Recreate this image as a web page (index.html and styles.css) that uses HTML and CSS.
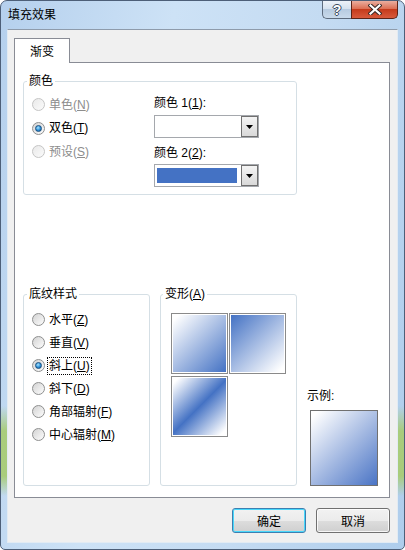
FILE: index.html
```html
<!DOCTYPE html>
<html lang="zh-CN">
<head>
    <meta charset="UTF-8">
    <title>填充效果</title>
    <link rel="stylesheet" href="styles.css">
</head>
<body>

    <div class="window">
        <div class="titlebar">
            <span class="title">填充效果</span>
            <div class="caption-btns">
                <span class="cap help">?</span>
                <span class="cap close">
                    <svg width="14" height="11" viewBox="0 0 14 11">
                        <path d="M2.5 1.5 L11.5 9.5 M11.5 1.5 L2.5 9.5" stroke="#3a2a28" stroke-width="4.2" stroke-linecap="square"/>
                        <path d="M2.5 1.5 L11.5 9.5 M11.5 1.5 L2.5 9.5" stroke="#ffffff" stroke-width="2.2" stroke-linecap="square"/>
                    </svg>
                </span>
            </div>
        </div>

        <div class="client">
            <div class="tabs">
                <div class="tab">渐变</div>
            </div>

            <div class="panel">
                <!-- 颜色 -->
                <fieldset class="group group-color">
                    <legend>颜色</legend>
                    <div class="color-body">
                        <div class="radios">
                            <div class="radio-row disabled"><span class="radio"></span><span class="rlabel">单色(<u>N</u>)</span></div>
                            <div class="radio-row"><span class="radio checked"></span><span class="rlabel">双色(<u>T</u>)</span></div>
                            <div class="radio-row disabled"><span class="radio"></span><span class="rlabel">预设(<u>S</u>)</span></div>
                        </div>
                        <div class="pickers">
                            <div class="picker-label">颜色 1(<u>1</u>):</div>
                            <div class="dropdown">
                                <span class="drop-btn"><svg width="7" height="4" viewBox="0 0 7 4"><path d="M0 0H7L3.5 4Z" fill="#000"/></svg></span>
                            </div>
                            <div class="picker-label second">颜色 2(<u>2</u>):</div>
                            <div class="dropdown">
                                <span class="swatch"></span>
                                <span class="drop-btn"><svg width="7" height="4" viewBox="0 0 7 4"><path d="M0 0H7L3.5 4Z" fill="#000"/></svg></span>
                            </div>
                        </div>
                    </div>
                </fieldset>

                <div class="bottom-row">
                    <!-- 底纹样式 -->
                    <fieldset class="group group-style">
                        <legend>底纹样式</legend>
                        <div class="style-body">
                            <div class="radio-row"><span class="radio"></span><span class="rlabel">水平(<u>Z</u>)</span></div>
                            <div class="radio-row"><span class="radio"></span><span class="rlabel">垂直(<u>V</u>)</span></div>
                            <div class="radio-row"><span class="radio checked"></span><span class="rlabel focused">斜上(<u>U</u>)</span></div>
                            <div class="radio-row"><span class="radio"></span><span class="rlabel">斜下(<u>D</u>)</span></div>
                            <div class="radio-row"><span class="radio"></span><span class="rlabel">角部辐射(<u>F</u>)</span></div>
                            <div class="radio-row"><span class="radio"></span><span class="rlabel">中心辐射(<u>M</u>)</span></div>
                        </div>
                    </fieldset>

                    <!-- 变形 -->
                    <fieldset class="group group-variant">
                        <legend>变形(<u>A</u>)</legend>
                        <div class="variants">
                            <div class="tile tile-a"></div>
                            <div class="tile tile-b"></div>
                            <div class="tile tile-c"></div>
                        </div>
                    </fieldset>

                    <div class="sample-col">
                        <div class="sample-label">示例:</div>
                        <div class="sample"></div>
                    </div>
                </div>
            </div>

            <div class="buttons">
                <button class="btn default">确定</button>
                <button class="btn">取消</button>
            </div>
        </div>
    </div>

</body>
</html>
```

FILE: styles.css
```css
body {
    margin: 0;
    font-family: "Liberation Sans", "Noto Sans CJK SC", sans-serif;
    font-size: 12px;
    color: #000;
}
u {
    text-decoration: underline;
    text-underline-offset: 1px;
}
.window {
    width: 405px;
    height: 550px;
    box-sizing: border-box;
    border: 1px solid #4d5f78;
    border-radius: 7px 7px 5px 5px;
    display: flex;
    flex-direction: column;
    overflow: hidden;
    background:
        linear-gradient(to bottom, rgba(168, 204, 118, 0) 405px, rgba(168, 204, 118, 0.95) 430px, rgba(168, 204, 118, 0.95) 475px, rgba(168, 204, 118, 0) 495px),
        linear-gradient(100deg, #b5d0ed 0%, #cde2f6 35%, #c4dbf2 65%, #aecdec 100%);
}
.titlebar {
    height: 28px;
    display: flex;
    align-items: flex-start;
    flex-shrink: 0;
}
.title {
    line-height: 28px;
    padding-left: 7px;
}
.caption-btns {
    margin-left: auto;
    margin-right: 6px;
    display: flex;
}
.cap {
    height: 18px;
    box-sizing: border-box;
    display: flex;
    align-items: center;
    justify-content: center;
    border: 1px solid #5d6b7d;
    border-top: none;
}
.help {
    width: 29px;
    border-right: none;
    border-radius: 0 0 0 5px;
    background: linear-gradient(#edf2f8, #d6e2ef 45%, #b7cbe0 50%, #c9daeb);
    font-weight: bold;
    font-size: 14px;
    color: #fff;
    text-shadow: 1px 0 #3b4a5c, -1px 0 #3b4a5c, 0 1px #3b4a5c, 0 -1px #3b4a5c;
}
.close {
    width: 47px;
    border-color: #5c2418;
    border-radius: 0 0 5px 0;
    background: linear-gradient(#eaae9f, #dc7055 45%, #c53b1c 50%, #d85a3d);
}
.client {
    flex: 1;
    margin: 0 6px 6px;
    background: #f0f0f0;
    border: 1px solid #e2ebf3;
    border-top-color: #8e9bab;
    display: flex;
    flex-direction: column;
    padding: 8px 0 0 6px;
}
.tabs {
    display: flex;
}
.tab {
    width: 56px;
    height: 25px;
    box-sizing: border-box;
    border: 1px solid #898c95;
    border-bottom: none;
    background: #fff;
    text-align: center;
    padding-top: 3px;
    line-height: 21px;
    margin-bottom: -1px;
    position: relative;
    z-index: 1;
}
.panel {
    width: 376px;
    height: 436px;
    box-sizing: border-box;
    border: 1px solid #898c95;
    background: #fff;
    padding: 10px 0 0 8px;
}
.group {
    margin: 0;
    padding: 0;
    min-width: 0;
    box-sizing: border-box;
    border: 1px solid #d5dfe5;
    border-radius: 3px;
}
.group legend {
    padding: 0 2px;
    margin-left: 3px;
    line-height: 16px;
}
.group-color {
    width: 274px;
}
.color-body {
    display: flex;
    padding: 4px 0 7px 8px;
}
.radios {
    width: 122px;
}
.radios .radio-row {
    height: 23.5px;
}
.radio-row {
    height: 23px;
    display: flex;
    align-items: center;
}
.radio {
    width: 13px;
    height: 13px;
    box-sizing: border-box;
    border-radius: 50%;
    border: 1px solid #8e8f8f;
    background: linear-gradient(135deg, #d3d3d3, #fdfdfd);
    display: flex;
    align-items: center;
    justify-content: center;
    flex-shrink: 0;
    margin-right: 2px;
}
.radio.checked::after {
    content: "";
    width: 7px;
    height: 7px;
    box-sizing: border-box;
    border-radius: 50%;
    border: 1px solid #1a4f7e;
    background: radial-gradient(circle at 40% 35%, #a8e4ff, #2b8ed6 55%, #0e5595);
}
.rlabel {
    line-height: 16px;
    padding: 0 1px;
    border: 1px solid transparent;
}
.rlabel.focused {
    border: 1px dotted #000;
}
.radio-row.disabled .radio {
    border-color: #c5c5c5;
    background: linear-gradient(135deg, #e9e9e9, #fbfbfb);
}
.radio-row.disabled .rlabel {
    color: #8d8d8d;
}
.pickers {
    padding-top: 2px;
}
.picker-label {
    line-height: 16px;
}
.picker-label.second {
    margin-top: 7px;
}
.dropdown {
    width: 105px;
    height: 23px;
    box-sizing: border-box;
    border: 1px solid #a5a8ad;
    background: #fff;
    display: flex;
    margin-top: 4px;
}
.picker-label.second + .dropdown {
    margin-top: 3px;
}
.swatch {
    width: 80px;
    height: 15px;
    margin: 3px 0 0 2px;
    background: #4472c4;
}
.drop-btn {
    margin-left: auto;
    width: 17px;
    height: 21px;
    box-sizing: border-box;
    border: 1px solid #707070;
    background: linear-gradient(#f4f4f4, #e6e6e6 50%, #d9d9d9);
    display: flex;
    align-items: center;
    justify-content: center;
}
.bottom-row {
    display: flex;
    margin-top: 91px;
}
.group-style {
    width: 127px;
}
.style-body {
    padding: 6px 0 3px 8px;
}
.group-variant {
    width: 137px;
    margin-left: 10px;
}
.group-variant legend {
    margin-left: 2px;
}
.variants {
    display: grid;
    grid-template-columns: 57px 57px;
    grid-auto-rows: 61px;
    column-gap: 1px;
    row-gap: 2px;
    padding: 11px 0 0 10px;
}
.tile {
    box-sizing: border-box;
    border: 1px solid #8a8a8a;
    padding: 1px;
}
.tile-a {
    background: linear-gradient(135deg, #ffffff 5%, #4472c4 100%) content-box, #fff;
}
.tile-b {
    background: linear-gradient(135deg, #4472c4 0%, #ffffff 95%) content-box, #fff;
}
.tile-c {
    background: linear-gradient(135deg, #ffffff 5%, #4472c4 50%, #ffffff 95%) content-box, #fff;
}
.sample-col {
    margin-left: 10px;
    padding-top: 102px;
}
.sample-label {
    line-height: 16px;
}
.sample {
    width: 68px;
    height: 76px;
    box-sizing: border-box;
    margin: 6px 0 0 3px;
    border: 1px solid #707070;
    background: linear-gradient(135deg, #ffffff 5%, #4a74c5 100%);
}
.buttons {
    display: flex;
    justify-content: flex-end;
    gap: 10px;
    margin: 10px 7px 0 0;
}
.btn {
    width: 74px;
    height: 25px;
    box-sizing: border-box;
    border: 1px solid #707070;
    border-radius: 3px;
    font-family: inherit;
    font-size: 12px;
    color: #000;
    padding: 0;
    background: linear-gradient(#f2f2f2, #ebebeb 50%, #dddddd 51%, #cfcfcf);
    box-shadow: inset 0 0 0 1px rgba(255, 255, 255, 0.8);
}
.btn.default {
    border-color: #3c7fb1;
    box-shadow: inset 0 0 0 1px #48d8fb;
}
```
